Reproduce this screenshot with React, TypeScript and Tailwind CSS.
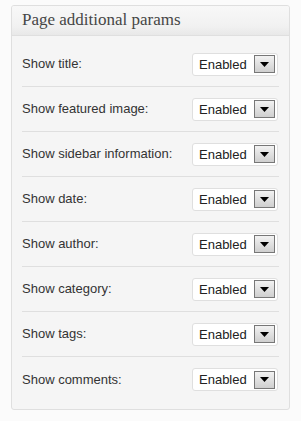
import React from "react";

const rows = [
  "Show title:",
  "Show featured image:",
  "Show sidebar information:",
  "Show date:",
  "Show author:",
  "Show category:",
  "Show tags:",
  "Show comments:",
];

function Select() {
  return (
    <div className="flex h-[23px] w-[86px] items-center rounded-[3px] border border-[#dfdfdf] bg-white pl-[6px] pr-[2px]">
      <span className="flex-1 text-[13px] leading-none text-[#222]">Enabled</span>
      <div className="flex h-[18px] w-[21px] items-center justify-center border border-[#777] bg-gradient-to-b from-[#f2f2f2] to-[#cfcfcf]">
        <svg width="9" height="5" viewBox="0 0 9 5">
          <polygon points="0,0 9,0 4.5,5" fill="#000" />
        </svg>
      </div>
    </div>
  );
}

export default function App() {
  return (
    <div
      className="h-[421px] w-[301px] bg-[#fbfbfb] pl-[11px] pr-[11px] pt-[5px]"
      style={{ fontFamily: '"Liberation Sans", Arial, sans-serif' }}
    >
      <div className="overflow-hidden rounded-[3px] border border-[#dfdfdf] bg-[#f5f5f5]">
        <div className="h-[30px] border-b border-[#dfdfdf] bg-gradient-to-b from-[#f8f8f8] via-[#f1f1f1] via-70% to-[#e8e8e8]">
          <div
            className="pl-[10px] pt-[4px] text-[17px] leading-[20px] text-[#464646]"
            style={{ fontFamily: '"Liberation Serif", "DejaVu Serif", serif' }}
          >
            Page additional params
          </div>
        </div>
        <div className="px-[10px] pb-[7px] pt-[6px]">
          {rows.map((label, i) => (
            <div
              key={label}
              className={`flex h-[45px] items-center justify-between ${
                i < rows.length - 1 ? "border-b border-[#dfdfdf]" : ""
              }`}
            >
              <span className="text-[13px] text-[#333]">{label}</span>
              <div className="pr-[1px]">
                <Select />
              </div>
            </div>
          ))}
        </div>
      </div>
    </div>
  );
}
